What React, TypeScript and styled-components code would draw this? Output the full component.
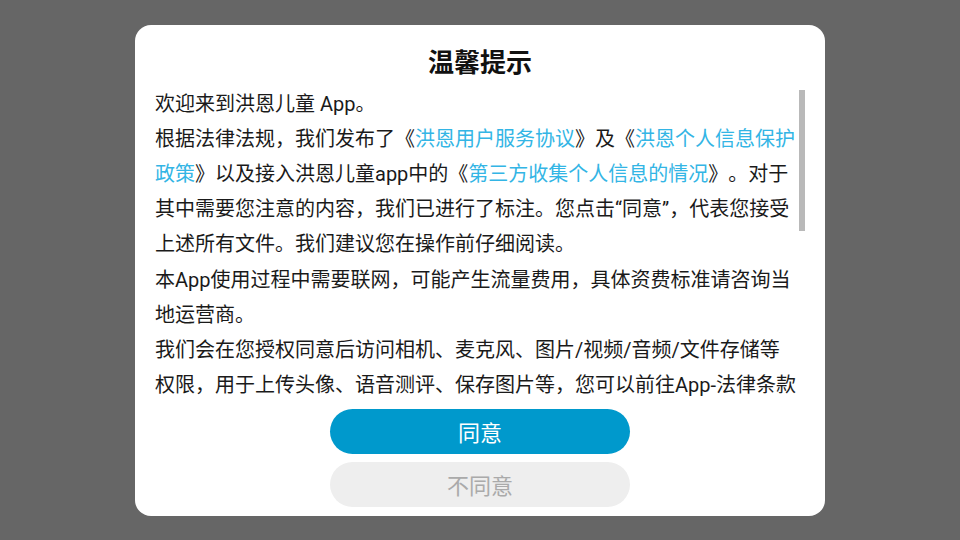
import React from 'react';
import styled, { createGlobalStyle } from 'styled-components';

const GlobalStyle = createGlobalStyle`
  html, body {
    margin: 0;
    padding: 0;
    background: #666666;
  }
  body {
    font-family: Roboto, "Noto Sans CJK SC", sans-serif;
  }
`;

const Screen = styled.div`
  width: 960px;
  height: 540px;
  display: flex;
  align-items: center;
  justify-content: center;
  background: #666666;
`;

const Dialog = styled.div`
  width: 690px;
  height: 491px;
  box-sizing: border-box;
  padding: 24px 20px 9px 20px;
  background: #ffffff;
  border-radius: 16px;
  display: flex;
  flex-direction: column;
`;

const Title = styled.h1`
  margin: 0;
  height: 28px;
  line-height: 28px;
  font-size: 26px;
  font-weight: 700;
  color: #111111;
  text-align: center;
`;

const BodyFrame = styled.div`
  position: relative;
  margin-top: 10px;
  height: 316px;
`;

const Body = styled.div`
  height: 100%;
  overflow-y: auto;
  scrollbar-width: none;
  box-sizing: border-box;
  padding-right: 6px;
  color: #1a1a1a;
  font-size: 20px;
  line-height: 35.2px;
  text-spacing-trim: space-all;

  &::-webkit-scrollbar {
    display: none;
  }
`;

/* drawn scroll indicator, sits over the right edge of the text area */
const ScrollThumb = styled.div`
  position: absolute;
  top: 3px;
  right: 0;
  width: 6px;
  height: 141px;
  background: #b9b9b9;
`;

const Para = styled.p`
  margin: 0;
`;

const Link = styled.span`
  color: #33b5e5;
`;

const Actions = styled.div`
  margin-top: 6px;
  display: flex;
  flex-direction: column;
  align-items: center;
  gap: 8px;
`;

const Button = styled.button<{ $primary?: boolean }>`
  width: 300px;
  height: 45px;
  border: none;
  border-radius: 23px;
  padding: 0;
  font-family: Roboto, "Noto Sans CJK SC", sans-serif;
  font-size: 22px;
  background: ${(p) => (p.$primary ? '#0099cc' : '#eeeeee')};
  color: ${(p) => (p.$primary ? '#ffffff' : '#aaaaaa')};
  cursor: pointer;
`;

export default function App() {
  return (
    <>
      <GlobalStyle />
      <Screen>
        <Dialog>
          <Title>温馨提示</Title>
          <BodyFrame>
            <Body>
              <Para>欢迎来到洪恩儿童 App。</Para>
              <Para>
                根据法律法规，我们发布了《<Link>洪恩用户服务协议</Link>》及《<Link>洪恩个人信息保护政策</Link>》以及接入洪恩儿童app中的《<Link>第三方收集个人信息的情况</Link>》。对于其中需要您注意的内容，我们已进行了标注。您点击“同意”，代表您接受上述所有文件。我们建议您在操作前仔细阅读。
              </Para>
              <Para>本App使用过程中需要联网，可能产生流量费用，具体资费标准请咨询当地运营商。</Para>
              <Para>
                我们会在您授权同意后访问相机、麦克风、图片/视频/音频/文件存储等权限，用于上传头像、语音测评、保存图片等，您可以前往App-法律条款中的隐私设置查看、管理或关闭上述权限，关闭后不影响您使用其他功能。
              </Para>
              <Para>
                我们会采取严格的安全措施保护您的个人信息，未经您的同意，我们不会向任何第三方提供您的个人信息。对于儿童个人信息，我们将按照国家相关法律法规的要求进行特别保护。
              </Para>
              <Para>
                如您是未满十四周岁的儿童，请在监护人的陪同下阅读上述协议，并在取得监护人同意后使用我们的产品与服务。
              </Para>
            </Body>
            <ScrollThumb />
          </BodyFrame>
          <Actions>
            <Button $primary>同意</Button>
            <Button>不同意</Button>
          </Actions>
        </Dialog>
      </Screen>
    </>
  );
}
